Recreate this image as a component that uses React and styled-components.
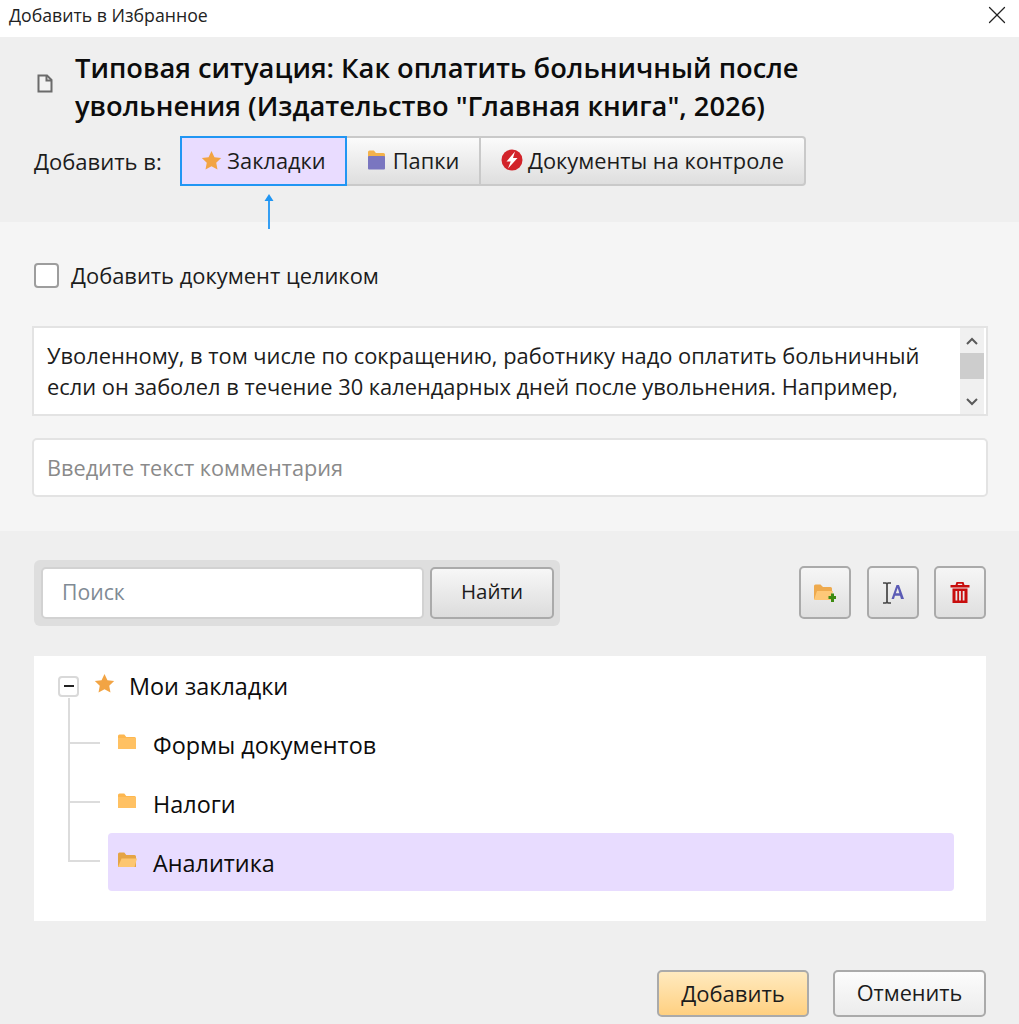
import styled, { createGlobalStyle } from 'styled-components'
import { X } from 'lucide-react'

const GlobalStyle = createGlobalStyle`
  html, body {
    margin: 0;
    padding: 0;
    background: #efefef;
  }
  * {
    box-sizing: border-box;
  }
  body {
    font-family: "Open Sans", "Noto Sans", "Liberation Sans", sans-serif;
    color: #111;
  }
`

const Dialog = styled.div`
  width: 1019px;
  height: 1024px;
  overflow: hidden;
  display: flex;
  flex-direction: column;
  background: #efefef;
`

const TitleBar = styled.div`
  height: 37px;
  flex: none;
  display: flex;
  align-items: center;
  justify-content: space-between;
  padding: 0 7px 8px 9px;
  background: #fff;
  font-size: 17.7px;
  color: #222;
`

const Header = styled.div`
  height: 185px;
  flex: none;
  padding: 12px 34px 0;
  background: #efefef;
`

const DocTitleRow = styled.div`
  display: flex;
  align-items: center;
  gap: 22px;
  padding-left: 3px;
`

const DocSlot = styled.span`
  display: flex;
  margin-top: -8px;
`

const DocTitle = styled.h1`
  margin: 0;
  font-size: 27.3px;
  line-height: 38px;
  font-weight: 600;
  color: #0c0c0c;
  white-space: nowrap;
`

const TargetRow = styled.div`
  display: flex;
  align-items: center;
  margin-top: 11px;
`

const TargetLabel = styled.span`
  width: 146px;
  font-size: 22px;
  color: #1c1c1c;
`

const TabGroup = styled.div`
  display: flex;
  height: 50px;
`

const Tab = styled.button`
  display: flex;
  align-items: center;
  justify-content: center;
  gap: ${({ $gap }) => $gap || 5}px;
  width: ${({ $width }) => $width}px;
  height: 50px;
  margin: 0;
  padding: 0 0 2px;
  font: inherit;
  font-size: 21.8px;
  color: #1c1c1c;
  white-space: nowrap;
  background: ${({ $active }) => ($active ? '#e9dcff' : 'linear-gradient(#fbfbfb, #dedede)')};
  border: ${({ $active }) => ($active ? '2px solid #2196f3' : '2px solid #c9c9c9')};
  border-left-width: ${({ $active }) => ($active ? 2 : 0)}px;
  border-radius: ${({ $last }) => ($last ? '0 4px 4px 0' : '0')};
`

const ArrowRow = styled.div`
  position: relative;
  z-index: 1;
  display: flex;
  padding-left: 230px;
  margin-top: 8px;
`

const QuoteSection = styled.div`
  height: 309px;
  flex: none;
  padding: 39px 31px 0 32px;
  background: #f5f5f5;
`

const CheckRow = styled.label`
  display: flex;
  align-items: center;
  gap: 12px;
  padding-left: 2px;
  font-size: 21.9px;
  color: #1c1c1c;
`

const CheckBox = styled.span`
  width: 25px;
  height: 25px;
  background: #fff;
  border: 2px solid #9d9d9d;
  border-radius: 4px;
`

const QuoteBox = styled.div`
  display: flex;
  justify-content: space-between;
  height: 90px;
  margin-top: 36px;
  padding-left: 13px;
  background: #fff;
  border: 2px solid #e3e3e3;
  overflow: hidden;
`

const QuoteText = styled.p`
  margin: 0;
  padding-top: 12px;
  font-size: 21.85px;
  line-height: 31px;
  color: #1c1c1c;
  white-space: nowrap;
`

const ScrollBar = styled.div`
  width: 24px;
  margin-right: 2px;
  display: flex;
  flex-direction: column;
  align-items: center;
  justify-content: space-between;
  background: #f0f0f0;
`

const ScrollButton = styled.div`
  height: 25px;
  display: flex;
  align-items: center;
  justify-content: center;
`

const ScrollThumb = styled.div`
  width: 100%;
  height: 26px;
  margin-bottom: 10px;
  background: #cdcdcd;
`

const CommentBox = styled.div`
  display: flex;
  align-items: center;
  height: 59px;
  margin-top: 22px;
  padding: 0 0 0 13px;
  background: #fff;
  border: 2px solid #e3e3e3;
  border-radius: 5px;
  font-size: 21.7px;
  color: #8a8a8a;
`

const Lower = styled.div`
  flex: 1;
  padding: 29px 33px 0 34px;
`

const Toolbar = styled.div`
  display: flex;
  align-items: flex-start;
  justify-content: space-between;
  height: 66px;
`

const SearchGroup = styled.div`
  display: flex;
  gap: 6px;
  width: 526px;
  height: 66px;
  padding: 7px 6px 7px 7px;
  background: #dedede;
  border-radius: 6px;
`

const SearchInput = styled.div`
  display: flex;
  align-items: center;
  flex: 1;
  padding: 0 0 4px 19px;
  background: #fff;
  border: 2px solid #d2d2d2;
  border-radius: 5px;
  font-size: 21.2px;
  color: #808a94;
`

const BaseButton = styled.button`
  margin: 0;
  padding: 0 0 2px;
  font: inherit;
  font-size: 21px;
  color: #1c1c1c;
  border: 2px solid #aaa;
  border-radius: 5px;
`

const SearchButton = styled(BaseButton)`
  width: 124px;
  padding-bottom: 4px;
  font-size: 20.5px;
  background: linear-gradient(#f7f7f7, #dcdcdc);
`

const IconButtons = styled.div`
  display: flex;
  gap: 15.5px;
  margin-top: 6px;
`

const IconButton = styled(BaseButton)`
  display: flex;
  align-items: center;
  justify-content: center;
  width: 52px;
  height: 53px;
  padding: 0;
  background: linear-gradient(#f6f6f6, #dfdfdf);
`

const TreePanel = styled.div`
  height: 265px;
  margin-top: 30px;
  padding: 9px 32px 0 24px;
  background: #fff;
`

const RootRow = styled.div`
  position: relative;
  display: flex;
  align-items: center;
  height: 42px;
  font-size: 23.4px;
  color: #0c0c0c;

  &::after {
    content: '';
    position: absolute;
    left: 10px;
    top: 33px;
    width: 2px;
    height: 164px;
    background: #dcdcdc;
  }
`

const Expander = styled.span`
  display: flex;
  align-items: center;
  justify-content: center;
  width: 21px;
  height: 21px;
  background: #fff;
  border: 2px solid #d9d9d9;
  border-radius: 4px;

  &::before {
    content: '';
    width: 10px;
    height: 2px;
    background: #222;
  }
`

const RootStar = styled.span`
  display: flex;
  margin: -6px 14px 0 15px;
`

const TreeList = styled.div`
  display: flex;
  flex-direction: column;
  padding-left: 50px;
  margin-top: 8px;
  gap: 1px;
`

const TreeRow = styled.div`
  position: relative;
  display: flex;
  align-items: center;
  gap: 16px;
  height: 58px;
  padding: 2px 0 0 10px;
  font-size: 23.4px;
  color: #0c0c0c;
  border-radius: 4px;
  background: ${({ $selected }) => ($selected ? '#e8dcff' : 'transparent')};

  &::before {
    content: '';
    position: absolute;
    left: -40px;
    top: 27px;
    width: 32px;
    height: 2px;
    background: #dcdcdc;
  }
`

const FolderSlot = styled.span`
  display: flex;
  margin-top: -6px;
`

const Footer = styled.div`
  display: flex;
  justify-content: flex-end;
  gap: 24px;
  margin-top: 49px;
`

const PrimaryButton = styled(BaseButton)`
  width: 152px;
  height: 47px;
  font-size: 22px;
  background: linear-gradient(#ffeabf, #ffd081);
`

const CancelButton = styled(BaseButton)`
  width: 153px;
  height: 47px;
  font-size: 21.7px;
  background: linear-gradient(#fcfcfc, #ececec);
`

const Star = ({ size = 21 }) => (
  <svg width={size} height={size} viewBox="0 0 20 20">
    <path d="M10 1l2.800 5.900 6.400.8-4.700 4.400 1.200 6.400L10 15.400l-5.700 3.100 1.200-6.400L.8 7.700l6.400-.8z" fill="#f2a444" />
  </svg>
)

const TabFolder = () => (
  <svg width="19" height="21" viewBox="0 0 19 21">
    <path d="M1 2A1.500 1.500 0 0 1 2.500.5h4.400l2 2.400h7.600A1.500 1.500 0 0 1 18 4.400V8H1z" fill="#f3b24c" />
    <rect x="1" y="6" width="17" height="13.500" rx="1" fill="#7a76c0" />
  </svg>
)

const AlertIcon = () => (
  <svg width="22" height="22" viewBox="0 0 22 22">
    <circle cx="11" cy="11" r="10.500" fill="#d2232a" />
    <path d="M14 2.500L5.500 12.500h4.200L7 19.500l9.500-10.500h-4.500z" fill="#fff" />
  </svg>
)

const DocIcon = () => (
  <svg width="16" height="19" viewBox="0 0 16 19" fill="none">
    <path d="M1.500 1.500h8.500l4.500 4.500v11.500h-13z" fill="#f2f2f2" stroke="#6b6b6b" strokeWidth="2" />
    <path d="M9.500 1.500v5h5" stroke="#6b6b6b" strokeWidth="2" />
  </svg>
)

const UpArrow = () => (
  <svg width="10" height="35" viewBox="0 0 10 35">
    <path d="M5 0l4.500 7H5.900v28H4.100V7H.5z" fill="#2196f3" />
  </svg>
)

const Chevron = ({ up }) => (
  <svg width="12" height="8" viewBox="0 0 12 8" fill="none">
    <path d={up ? 'M1 7l5-5 5 5' : 'M1 1l5 5 5-5'} stroke="#5a5a5a" strokeWidth="2" />
  </svg>
)

const Folder = ({ open }) => (
  <svg width="19" height="16" viewBox="0 0 19 16">
    <path d="M0 2a1.500 1.500 0 0 1 1.500-1.500h4.800L8.300 3h8.200A1.500 1.500 0 0 1 18 4.500V15H0z" fill={open ? '#e5a445' : '#fdb750'} />
    {open ? <path d="M3.500 6.500H19L16.500 15H0z" fill="#fdc670" /> : <rect y="4" width="18" height="11" fill="#ffc163" />}
  </svg>
)

const AddFolderIcon = () => (
  <svg width="22" height="20" viewBox="0 0 22 20">
    <path d="M0 3a1.500 1.500 0 0 1 1.500-1.500h5L9 4h7.500A1.500 1.500 0 0 1 18 5.500V16H0z" fill="#eeaa4e" />
    <path d="M3 8h16l-2 9H0z" fill="#fdc878" />
    <path d="M14.500 13h2.500v-2.500h3V13h2.500v3H20v3h-3v-3h-2.500z" fill="#3d8b12" />
  </svg>
)

const RenameIcon = () => (
  <svg width="24" height="22" viewBox="0 0 24 22" fill="none">
    <path d="M2 1h3l1 1 1-1h3M6 2v18M2 21h3l1-1 1 1h3" stroke="#444" strokeWidth="1.700" />
    <path d="M10.500 17L15.500 3h2.500l5 14h-3l-1-3.200h-5L13 17zM14.800 11.300h3.600L16.700 6z" fill="#5b5bb5" />
  </svg>
)

const TrashIcon = () => (
  <svg width="20" height="21" viewBox="0 0 20 21" fill="#c80d0d">
    <path d="M6.500 0h7l1 3H19.500v2.400H.5V3h5zM8 1.800 7.600 3h4.800L12 1.800z" />
    <path d="M2.500 6.500h15V21h-15zM5.500 9v9.500h1.800V9zM9.100 9v9.500h1.800V9zM12.700 9v9.500h1.800V9z" fillRule="evenodd" />
  </svg>
)

const folders = [
  { name: 'Формы документов' },
  { name: 'Налоги' },
  { name: 'Аналитика', selected: true },
]

export default function App() {
  return (
    <Dialog>
      <GlobalStyle />
      <TitleBar>
        <span>Добавить в Избранное</span>
        <X size={30} strokeWidth={1} color="#222" />
      </TitleBar>

      <Header>
        <DocTitleRow>
          <DocSlot>
            <DocIcon />
          </DocSlot>
          <DocTitle>
            Типовая ситуация: Как оплатить больничный после
            <br />
            увольнения (Издательство "Главная книга", 2026)
          </DocTitle>
        </DocTitleRow>
        <TargetRow>
          <TargetLabel>Добавить в:</TargetLabel>
          <TabGroup>
            <Tab $active $width={167}>
              <Star />
              Закладки
            </Tab>
            <Tab $width={134} $gap={7}>
              <TabFolder />
              Папки
            </Tab>
            <Tab $last $width={325}>
              <AlertIcon />
              Документы на контроле
            </Tab>
          </TabGroup>
        </TargetRow>
        <ArrowRow>
          <UpArrow />
        </ArrowRow>
      </Header>

      <QuoteSection>
        <CheckRow>
          <CheckBox />
          Добавить документ целиком
        </CheckRow>
        <QuoteBox>
          <QuoteText>
            Уволенному, в том числе по сокращению, работнику надо оплатить больничный
            <br />
            если он заболел в течение 30 календарных дней после увольнения. Например,
          </QuoteText>
          <ScrollBar>
            <ScrollButton>
              <Chevron up />
            </ScrollButton>
            <ScrollThumb />
            <ScrollButton>
              <Chevron />
            </ScrollButton>
          </ScrollBar>
        </QuoteBox>
        <CommentBox>Введите текст комментария</CommentBox>
      </QuoteSection>

      <Lower>
        <Toolbar>
          <SearchGroup>
            <SearchInput>Поиск</SearchInput>
            <SearchButton>Найти</SearchButton>
          </SearchGroup>
          <IconButtons>
            <IconButton>
              <AddFolderIcon />
            </IconButton>
            <IconButton>
              <RenameIcon />
            </IconButton>
            <IconButton>
              <TrashIcon />
            </IconButton>
          </IconButtons>
        </Toolbar>

        <TreePanel>
          <RootRow>
            <Expander />
            <RootStar>
              <Star />
            </RootStar>
            Мои закладки
          </RootRow>
          <TreeList>
            {folders.map((folder) => (
              <TreeRow key={folder.name} $selected={folder.selected}>
                <FolderSlot>
                  <Folder open={folder.selected} />
                </FolderSlot>
                {folder.name}
              </TreeRow>
            ))}
          </TreeList>
        </TreePanel>

        <Footer>
          <PrimaryButton>Добавить</PrimaryButton>
          <CancelButton>Отменить</CancelButton>
        </Footer>
      </Lower>
    </Dialog>
  )
}
